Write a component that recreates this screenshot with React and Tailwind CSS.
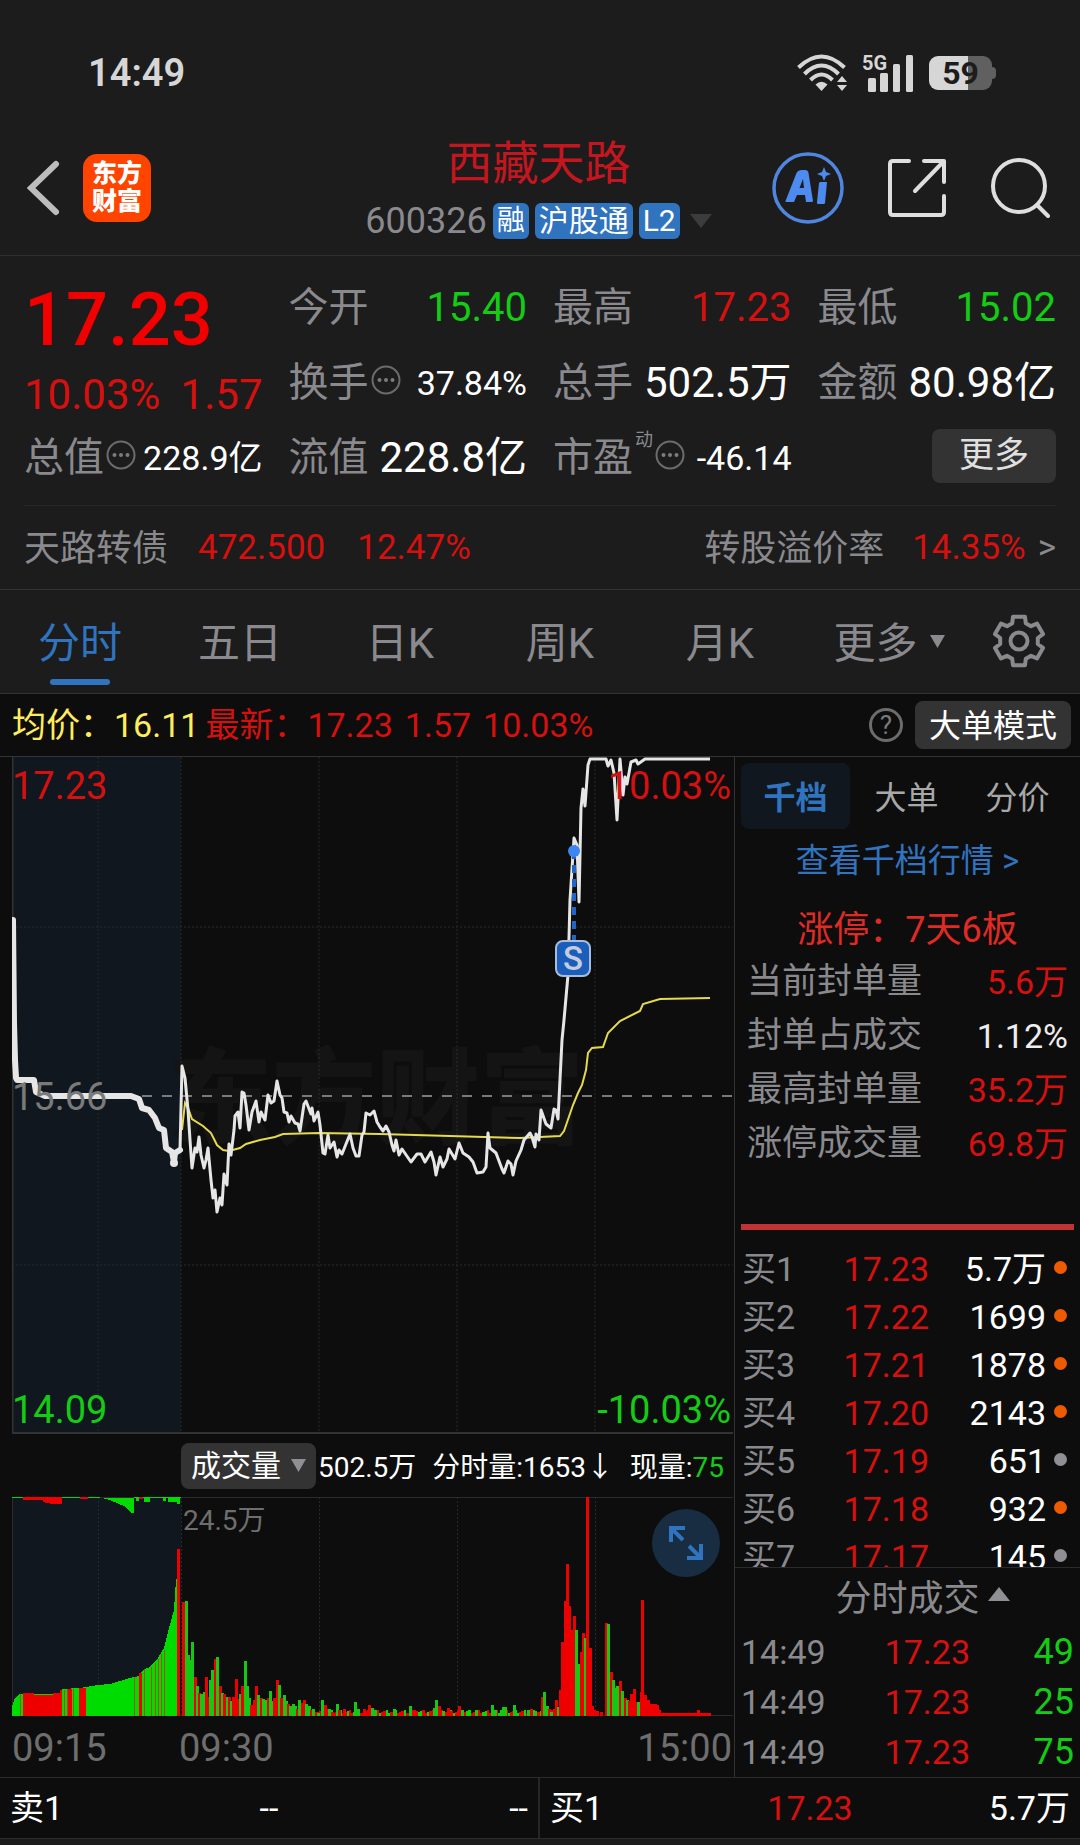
import React, { useState } from "react";

const RED = "text-[#d6100e]";
const GREEN = "text-[#14cc14]";

const quoteColumns = [
  [
    { label: "今开", value: "15.40", size: "text-[40px]", color: GREEN },
    { label: "换手", value: "37.84%", size: "text-[34px]", info: true },
    { label: "流值", value: "228.8亿", size: "text-[42px]" },
  ],
  [
    { label: "最高", value: "17.23", size: "text-[40px]", color: RED },
    { label: "总手", value: "502.5万", size: "text-[42px]" },
    { label: "市盈", value: "-46.14", size: "text-[34px]", sup: "动", info: true },
  ],
  [
    { label: "最低", value: "15.02", size: "text-[40px]", color: GREEN },
    { label: "金额", value: "80.98亿", size: "text-[42px]" },
  ],
];

const periods = ["分时", "五日", "日K", "周K", "月K"];
const depthTabs = ["千档", "大单", "分价"];

const sealStats = [
  { label: "当前封单量", value: "5.6万", color: RED },
  { label: "封单占成交", value: "1.12%", color: "text-[#eeeeee]" },
  { label: "最高封单量", value: "35.2万", color: RED },
  { label: "涨停成交量", value: "69.8万", color: RED },
];

const bids = [
  { level: "买1", price: "17.23", qty: "5.7万", big: true },
  { level: "买2", price: "17.22", qty: "1699", big: true },
  { level: "买3", price: "17.21", qty: "1878", big: true },
  { level: "买4", price: "17.20", qty: "2143", big: true },
  { level: "买5", price: "17.19", qty: "651", big: false },
  { level: "买6", price: "17.18", qty: "932", big: true },
  { level: "买7", price: "17.17", qty: "145", big: false },
];

const trades = [
  { time: "14:49", price: "17.23", qty: "49" },
  { time: "14:49", price: "17.23", qty: "25" },
  { time: "14:49", price: "17.23", qty: "75" },
];

// Opening auction, then the minute line
const auctionLine =
  "13,920 14,1023 15,1060 16,1078 17,1080 34,1080 36,1092 45,1096 131,1096 139,1099 142,1108 149,1110 155,1118 159,1128 164,1130 166,1148 172,1152 174,1162 175,1153 180,1150";
const priceLine =
  "180,1150 182,1066 185,1078 188,1110 190,1140 192,1168 195,1148 197,1152 199,1137 201,1155 204,1168 206,1160 208,1148 211,1180 213,1198 215,1190 217,1212 220,1198 222,1205 224,1174 227,1185 229,1144 231,1155 234,1130 235,1116 238,1112 240,1128 242,1092 244,1093 246,1105 249,1130 252,1112 256,1101 259,1122 261,1112 265,1120 268,1095 271,1103 274,1101 277,1081 280,1095 282,1098 284,1112 287,1113 289,1122 291,1116 295,1123 298,1124 300,1131 304,1104 306,1101 311,1114 312,1108 314,1121 318,1112 320,1125 323,1153 325,1154 328,1135 330,1148 334,1142 337,1157 339,1150 342,1154 350,1134 353,1148 356,1156 359,1156 362,1135 364,1132 366,1113 370,1115 374,1111 377,1122 380,1127 383,1131 386,1126 389,1132 392,1145 394,1151 396,1140 399,1155 402,1149 411,1162 417,1154 421,1154 425,1162 431,1152 434,1162 436,1175 440,1157 443,1167 447,1159 449,1149 455,1159 459,1143 463,1153 469,1157 473,1162 477,1173 483,1172 486,1167 488,1133 490,1148 496,1153 502,1169 504,1173 508,1161 511,1164 513,1175 516,1161 521,1150 524,1140 530,1133 532,1137 535,1147 536,1134 539,1140 541,1110 546,1124 551,1128 554,1109 556,1110 558,1119 562,1040 564,1020 568,975 570,900 574,838 577,845 579,902 581,808 583,789 585,806 588,765 590,759 606,759 608,766 611,760 614,773 617,820 620,759 623,795 625,777 627,784 631,762 636,760 638,764 645,759 710,759";
const averageLine =
  "182,1130 185,1103 188,1108 192,1119 203,1126 211,1133 217,1145 223,1150 229,1151 240,1148 246,1144 260,1140 275,1137 283,1134 319,1133 380,1134 450,1136 520,1138 560,1136 564,1131 573,1105 578,1093 582,1085 586,1070 588,1053 592,1048 603,1047 608,1033 620,1021 640,1011 643,1004 660,999 710,998";

// [x, top of the bar, 1 = up / 0 = down]
const volumeBars = [
  [182, 1602, 1], [185, 1601, 0], [187, 1655, 0], [189, 1660, 0], [191, 1642, 0], [194, 1677, 1], [196, 1686, 0], [198, 1693, 1],
  [200, 1694, 0], [203, 1692, 0], [205, 1677, 1], [207, 1697, 1], [209, 1680, 0], [211, 1670, 0], [214, 1659, 1], [216, 1657, 0],
  [219, 1686, 1], [221, 1693, 0], [223, 1694, 1], [226, 1697, 0], [228, 1697, 1], [230, 1701, 0], [232, 1697, 1], [235, 1679, 1],
  [237, 1699, 1], [239, 1694, 0], [241, 1686, 1], [244, 1661, 0], [246, 1686, 0], [248, 1698, 0], [250, 1705, 1], [253, 1700, 1],
  [255, 1686, 1], [257, 1695, 0], [260, 1698, 1], [262, 1699, 0], [264, 1700, 0], [267, 1698, 1], [269, 1691, 0], [271, 1701, 0],
  [273, 1698, 1], [276, 1680, 1], [278, 1685, 0], [280, 1698, 1], [283, 1695, 0], [285, 1701, 0], [287, 1704, 1], [289, 1706, 0],
  [292, 1704, 0], [294, 1706, 0], [296, 1709, 1], [298, 1700, 0], [301, 1703, 1], [303, 1700, 1], [305, 1704, 0], [308, 1706, 0],
  [310, 1710, 1], [312, 1709, 0], [315, 1712, 1], [317, 1713, 0], [321, 1700, 0], [324, 1705, 1], [326, 1709, 1], [328, 1709, 0],
  [331, 1712, 1], [336, 1704, 0], [338, 1710, 1], [343, 1709, 1], [354, 1702, 0], [357, 1709, 0], [363, 1709, 1], [368, 1705, 1],
  [371, 1708, 0], [374, 1710, 0], [393, 1709, 0], [401, 1711, 1], [409, 1706, 0], [412, 1710, 1], [415, 1711, 1], [433, 1708, 0],
  [435, 1700, 0], [438, 1706, 1], [442, 1711, 0], [447, 1708, 1], [450, 1711, 1], [458, 1706, 1], [461, 1710, 0], [475, 1710, 0],
  [491, 1705, 0], [494, 1710, 0], [500, 1710, 0], [502, 1707, 0], [504, 1707, 0], [513, 1705, 0], [527, 1710, 0], [530, 1709, 1],
  [534, 1711, 0], [541, 1697, 1], [543, 1692, 0], [546, 1706, 0], [548, 1709, 1], [550, 1712, 0], [553, 1709, 1], [555, 1700, 1],
  [557, 1707, 0], [559, 1690, 1], [561, 1642, 1], [564, 1601, 1], [566, 1564, 1], [568, 1606, 1], [570, 1630, 1], [573, 1616, 1],
  [575, 1630, 0], [577, 1664, 0], [580, 1652, 1], [582, 1633, 1], [584, 1638, 0], [586, 1497, 1], [589, 1648, 1], [591, 1706, 1],
  [593, 1710, 1], [596, 1711, 1], [600, 1712, 1], [605, 1623, 1], [607, 1624, 0], [610, 1672, 1], [612, 1680, 0], [614, 1688, 0],
  [616, 1686, 0], [619, 1681, 1], [621, 1691, 0], [624, 1698, 1], [626, 1700, 0], [628, 1701, 1], [630, 1694, 1], [633, 1689, 1],
  [635, 1702, 1], [637, 1702, 0], [640, 1692, 1], [641, 1600, 1], [644, 1695, 1], [647, 1700, 1], [649, 1704, 1], [652, 1704, 1],
  [654, 1704, 1], [656, 1705, 1], [658, 1710, 1],
];

// quiet minutes around noon, about the same small volume in each
const quietBars = Array.from({ length: 105 }, (_, i) => ({
  x: 312 + i * 2.3,
  top: 1710 + ((i * 7) % 4),
  up: (i * 5) % 7 < 4,
}));

const auctionStripes = [
  [20, 1694], [64, 1690], [67, 1689], [73, 1689], [134, 1677], [144, 1669], [151, 1667], [155, 1663], [158, 1659], [161, 1654], [164, 1650],
];

const gearPoints = Array.from({ length: 6 }, (_, k) =>
  [[-21, 19], [-14, 25], [14, 25], [21, 19]].map(([deg, r]) => {
    const a = ((k * 60 + deg) * Math.PI) / 180;
    return `${(27 + r * Math.sin(a)).toFixed(1)},${(27 - r * Math.cos(a)).toFixed(1)}`;
  })
)
  .flat()
  .join(" ");

function InfoDots() {
  return (
    <svg viewBox="0 0 30 30" className="mb-1.5 ml-0.5 h-[30px] w-[30px] shrink-0" fill="none">
      <circle cx="15" cy="15" r="13.5" stroke="#6c6c6e" strokeWidth="2" />
      <circle cx="8.5" cy="15" r="2" fill="#7c7c80" />
      <circle cx="15" cy="15" r="2" fill="#7c7c80" />
      <circle cx="21.5" cy="15" r="2" fill="#7c7c80" />
    </svg>
  );
}

function StatusBar() {
  return (
    <div className="flex h-[134px] items-center justify-between pt-3 pr-[84px] pl-[88px]">
      <span className="text-[38px] font-semibold text-[#d6d6d6]">14:49</span>
      <div className="flex items-center gap-[15px]">
        <svg viewBox="0 0 50 38" className="h-[38px] w-[50px]" fill="none" stroke="#d6d6d6" strokeWidth="4">
          <path d="M1.5 13.5 Q24.500 -8.500 47.500 13.500" />
          <path d="M7.500 20 Q24.500 3 41.500 20" />
          <path d="M13.500 26 Q24.500 15 35.500 26" />
          <path d="M24.500 37 L18.500 30.500 Q24.500 25 30.500 30.500 Z" fill="#d6d6d6" stroke="none" />
          <path d="M45 22 L50 28 H40 Z M45 37 L50 31 H40 Z" fill="#d6d6d6" stroke="none" />
        </svg>
        <div className="relative h-[38px] w-[52px]">
          <span className="absolute top-0 left-0 text-[20px] leading-[18px] font-bold text-[#d6d6d6]">5G</span>
          <svg viewBox="0 0 52 38" className="h-full w-full" fill="#d6d6d6">
            <rect x="6" y="24" width="8" height="14" rx="1.500" />
            <rect x="18" y="19" width="8" height="19" rx="1.500" />
            <rect x="31" y="10" width="7" height="28" rx="1.500" />
            <rect x="44" y="1" width="7" height="37" rx="1.500" />
          </svg>
        </div>
        <div className="flex items-center">
          <div className="flex h-[34px] w-[63px] items-center justify-center rounded-[9px] bg-linear-to-r from-[#d6d6d6] from-62% to-[#606060] to-62% text-[32px] font-bold text-[#1c1c1c]">
            59
          </div>
          <div className="h-3 w-1 rounded-r bg-[#606060]" />
        </div>
      </div>
    </div>
  );
}

function Header() {
  return (
    <header className="grid h-[122px] grid-cols-[1fr_auto_1fr] items-center border-b border-[#2e2e2e] pr-[30px] pb-3.5 pl-[27px]">
      <div className="flex items-center gap-[23px]">
        <button aria-label="返回">
          <svg viewBox="0 0 33 56" className="h-[56px] w-[33px]" fill="none" stroke="#bdbdbd" strokeWidth="6" strokeLinecap="round">
            <path d="M29 4 L4 28 L29 52" />
          </svg>
        </button>
        <div className="flex h-[68px] w-[68px] flex-col items-center justify-center rounded-[14px] bg-[#ff4400] text-[25px] leading-[28px] font-black text-white">
          <span>东方</span>
          <span>财富</span>
        </div>
      </div>
      <div className="flex flex-col items-center gap-3.5">
        <h1 className="text-[46px] leading-[52px] text-[#c4161f]">西藏天路</h1>
        <div className="flex items-center gap-1.5 leading-9">
          <span className="text-[36px] text-[#8a8a8e]">600326</span>
          <span className="rounded-md bg-[#3073be] px-1 text-[28px] text-white">融</span>
          <span className="rounded-md bg-[#3073be] px-1 text-[30px] text-white">沪股通</span>
          <span className="rounded-md bg-[#3073be] px-1 text-[30px] text-white">L2</span>
          <svg viewBox="0 0 22 14" className="ml-1 h-3.5 w-[22px]" fill="#3c3c3c">
            <path d="M0 0 H22 L11 14 Z" />
          </svg>
        </div>
      </div>
      <div className="flex items-center justify-end gap-[43px]">
        <button aria-label="AI 助手">
          <svg viewBox="0 0 72 72" className="h-[72px] w-[72px]" fill="none">
            <circle cx="36" cy="36" r="34" stroke="#4f86e0" strokeWidth="3.500" />
            <path
              d="M13.500 49 L24.500 21 Q26 18 30 18 H33 Q36 18 36.500 21 L41 49 Q41 50 39.500 50 H34 L33 43 H25 L22 50 H14.500 Q13 50 13.500 49 Z M27.500 36 H32 L31 27 Z"
              fill="#4d8bf0"
              fillRule="evenodd"
            />
            <path d="M48 30 H55 L53 51 Q53 52 51.500 52 H46 Q44.500 52 45 50 L47 31 Z" fill="#4d8bf0" />
            <path d="M52 15 L54 20 L59 22 L54 24 L52 29 L50 24 L45 22 L50 20 Z" fill="#4d8bf0" />
          </svg>
        </button>
        <button aria-label="分享">
          <svg viewBox="0 0 60 60" className="h-[60px] w-[60px]" fill="none" stroke="#dedede" strokeWidth="4" strokeLinecap="round" strokeLinejoin="round">
            <path d="M22 3 H6 Q3 3 3 6 V54 Q3 57 6 57 H54 Q57 57 57 54 V38" />
            <path d="M37 3 H57 V24 M57 3 L28 33" />
          </svg>
        </button>
        <button aria-label="搜索">
          <svg viewBox="0 0 60 62" className="h-[62px] w-[60px]" fill="none" stroke="#dedede" strokeWidth="4" strokeLinecap="round">
            <circle cx="29" cy="29" r="26" />
            <path d="M47 48 L58 59" />
          </svg>
        </button>
      </div>
    </header>
  );
}

function QuoteCell({ item }) {
  return (
    <div className="flex h-[75px] items-center justify-between">
      <div className="flex items-center text-[40px] text-[#8a8a8e]">
        {item.label}
        {item.sup && <span className="mb-9 ml-0.5 text-[18px]">{item.sup}</span>}
        {item.info && <InfoDots />}
      </div>
      <span className={`${item.size} ${item.color || "text-white"}`}>{item.value}</span>
    </div>
  );
}

function Quote() {
  return (
    <section className="px-6">
      <div className="grid grid-cols-4 gap-[26px] border-b border-[#262626] pt-3.5 pb-2.5 leading-none whitespace-nowrap">
        <div>
          <div className="flex h-[100px] items-center text-[74px] font-medium text-[#f20000]">17.23</div>
          <div className={`flex h-[50px] items-center justify-between text-[42px] ${RED}`}>
            <span>10.03%</span>
            <span>1.57</span>
          </div>
          <QuoteCell item={{ label: "总值", value: "228.9亿", size: "text-[34px]", info: true }} />
        </div>
        {quoteColumns.map((column, i) => (
          <div key={i}>
            {column.map((item) => (
              <QuoteCell key={item.label} item={item} />
            ))}
            {i === 2 && (
              <div className="flex h-[75px] items-center justify-end pb-1">
                <button className="h-[54px] rounded-lg bg-[#333333] px-[27px] text-[35px] text-[#e0e0e0]">更多</button>
              </div>
            )}
          </div>
        ))}
      </div>
      <div className="flex h-[83px] items-center pt-0.5 text-[35px] text-[#8a8a8e]">
        <span className="text-[36px]">天路转债</span>
        <span className={`ml-[30px] ${RED}`}>472.500</span>
        <span className={`ml-8 ${RED}`}>12.47%</span>
        <span className="ml-auto text-[36px]">转股溢价率</span>
        <a href="#premium" className="ml-7 flex items-center gap-3">
          <span className={RED}>14.35%</span>
          <span>&gt;</span>
        </a>
      </div>
    </section>
  );
}

function PeriodTabs() {
  const [active, setActive] = useState("分时");

  return (
    <nav className="flex h-[105px] border-y border-[#333333] text-[42px] text-[#8a8a8e]">
      {periods.map((p) => (
        <button
          key={p}
          onClick={() => setActive(p)}
          className={`relative flex-[160] pt-1 ${p === active ? "text-[#3073be]" : ""}`}
        >
          {p}
          {p === active && <span className="absolute bottom-2 left-1/2 h-1.5 w-[60px] -translate-x-1/2 rounded-full bg-[#3073be]" />}
        </button>
      ))}
      <button className="flex flex-[178] items-center justify-center gap-3 pt-1">
        更多
        <svg viewBox="0 0 15 13" className="mb-1 h-[13px] w-[15px]" fill="#8a8a8e">
          <path d="M0 0 H15 L7.500 13 Z" />
        </svg>
      </button>
      <button aria-label="设置" className="flex w-[102px] shrink-0 items-center pb-0.5 pl-3.5">
        <svg viewBox="0 0 54 54" className="h-[54px] w-[54px]" fill="none" stroke="#8a8a8e" strokeWidth="4" strokeLinejoin="round">
          <polygon points={gearPoints} />
          <circle cx="27" cy="27" r="8.500" />
        </svg>
      </button>
    </nav>
  );
}

function InfoBar() {
  return (
    <div className="flex h-[63px] items-center border-b border-[#333333] bg-[#0d0d0d] pr-[9px] pl-3 text-[34px] whitespace-nowrap">
      <span className="text-[#ffec5e]">均价：16.11</span>
      <div className={`ml-1.5 flex gap-3 ${RED}`}>
        <span>最新：17.23</span>
        <span>1.57</span>
        <span>10.03%</span>
      </div>
      <button aria-label="说明" className="mr-3 ml-auto flex h-[34px] w-[34px] items-center justify-center rounded-full border-3 border-[#6c6c6c] text-[26px] leading-none text-[#7a7a7a]">
        ?
      </button>
      <button className="h-12 rounded-lg bg-[#333333] px-3.5 text-[32px] leading-[50px] text-white">大单模式</button>
    </div>
  );
}

function PriceChart() {
  return (
    <div className="relative text-[38px] leading-none">
      <svg viewBox="12 757 722 677" className="block h-auto w-full" fill="none">
        <rect x="12" y="757" width="169" height="677" fill="#10171f" />
        <text x="168" y="1136" fontSize="104" fontWeight="900" fill="#141414">东方财富</text>
        <g stroke="#262a2d" strokeWidth="1" strokeDasharray="2 2">
          <path d="M98 757 V1434 M181 757 V1434 M319 757 V1434 M457 757 V1434 M595 757 V1434" />
          <path d="M12 927 H733 M12 1265 H733" />
        </g>
        <path d="M12.500 757 V1433 H733" stroke="#333333" strokeWidth="2" />
        <path d="M142 1096 H733" stroke="#7a7a7a" strokeWidth="2" strokeDasharray="10 10" />
        <polyline points={averageLine} stroke="#e5d94c" strokeWidth="2" />
        <polyline points={auctionLine} stroke="#e6e6e6" strokeWidth="6" strokeLinejoin="round" strokeLinecap="round" />
        <polyline points={priceLine} stroke="#e6e6e6" strokeWidth="3" strokeLinejoin="round" />
        <circle cx="174" cy="1163" r="4" fill="#e6e6e6" />
        <path d="M574 851 V941" stroke="#2166c4" strokeWidth="4" strokeDasharray="8 6" />
        <circle cx="574" cy="851" r="6" fill="#3d86f0" />
        <rect x="556" y="941" width="34" height="35" rx="7" fill="#1b5dba" stroke="#a8bdd9" strokeWidth="2" />
        <text x="573" y="970" textAnchor="middle" fontSize="33" fontWeight="500" fill="#c3cddb">S</text>
      </svg>
      <span className={`absolute top-[10px] left-0 ${RED}`}>17.23</span>
      <span className={`absolute top-[10px] right-[3px] ${RED}`}>10.03%</span>
      <span className="absolute top-[321px] left-0 text-[#7a7a7a]">15.66</span>
      <span className={`absolute bottom-[5px] left-0 ${GREEN}`}>14.09</span>
      <span className={`absolute right-[3px] bottom-[5px] ${GREEN}`}>-10.03%</span>
    </div>
  );
}

function VolumeChart() {
  return (
    <div className="relative">
      <svg viewBox="12 1497 722 219" className="block h-auto w-full" shapeRendering="crispEdges">
        <rect x="12" y="1497" width="169" height="219" fill="#10171f" />
        <path
          d="M98 1497 V1716 M181 1497 V1716 M319 1497 V1716 M457 1497 V1716 M595 1497 V1716"
          stroke="#262a2d"
          strokeDasharray="2 2"
        />
        <path d="M12 1497.500 H733 M12 1715.500 H733 M12.500 1497 V1716" stroke="#2b2b2b" />
        <polygon
          fill="#00dc00"
          points="12,1716 12,1706 15,1698 19,1694 60,1694 62,1689 80,1688 98,1685 110,1684 130,1678 139,1676 143,1670 150,1667 158,1658 164,1648 168,1632 174,1610 176,1580 177,1578 180,1578 180,1716"
        />
        <path d="M23 1716 V1693 H34 V1695 H53 V1693 H60 V1690 H62 V1716 Z M67 1689 H72 V1716 H67 Z M79 1688 H86 V1716 H79 Z M139 1673 H142 V1716 H139 Z M177 1549 H180 V1716 H177 Z" fill="#ee0000" />
        {auctionStripes.map(([x, top]) => (
          <rect key={x} x={x} y={top} width="1" height={1716 - top} fill="#b04a10" />
        ))}
        <path d="M12 1497 H181 V1498 H12 Z M98 1497 L110 1500 L124 1506 L132 1513 H134 V1497 Z M136 1497 H139 V1501 H136 Z M144 1497 H150 V1502 H144 Z M163 1497 H166 V1501 H163 Z M168 1497 H177 V1502 H168 Z M177 1497 H180 V1504 H177 Z" fill="#00dc00" />
        <path d="M23 1497 H62 V1504 H52 L43 1502 V1500 H23 Z M80 1497 H88 V1499 H80 Z M139 1497 H143 V1499 H139 Z" fill="#ee0000" />
        {quietBars.map((b) => (
          <rect key={b.x} x={b.x} y={b.top} width="2.300" height={1716 - b.top} fill={b.up ? "#ee0000" : "#00dc00"} />
        ))}
        {volumeBars.map(([x, top, up]) => (
          <rect key={x} x={x} y={top} width="3" height={1716 - top} fill={up ? "#ee0000" : "#14c814"} />
        ))}
        <path d="M660 1716 V1713 H697 V1710 H700 V1713 H711 V1716 Z" fill="#ee0000" />
      </svg>
      <span className="absolute top-2 left-[171px] text-[28px] leading-[32px] text-[#6e6e6e]">24.5万</span>
      <button aria-label="全屏" className="absolute top-3 right-[14px] flex h-[68px] w-[68px] items-center justify-center rounded-full bg-[#182c42]">
        <svg viewBox="0 0 34 34" className="h-[34px] w-[34px]" fill="none" stroke="#3073be" strokeWidth="4">
          <path d="M16 2 H2 V16 M2 2 L14 14" />
          <path d="M18 32 H32 V18 M32 32 L20 20" />
        </svg>
      </button>
    </div>
  );
}

function DepthPanel() {
  const [tab, setTab] = useState("千档");

  return (
    <aside className="flex w-[346px] shrink-0 flex-col border-l border-[#333333] pt-1.5 text-[34px]">
      <div className="flex h-[66px] gap-0.5 pr-2 pl-1.5 text-[32px] text-[#a8a8a8]">
        {depthTabs.map((t) => (
          <button
            key={t}
            onClick={() => setTab(t)}
            className={`flex-1 rounded-lg pt-1 ${t === tab ? "bg-[#10171f] font-bold text-[#3073be]" : ""}`}
          >
            {t}
          </button>
        ))}
      </div>
      <a href="#depth" className="block text-center text-[33px] leading-[64px] text-[#3073be]">查看千档行情 &gt;</a>
      <p className="pt-3 text-center text-[36px] leading-[50px] text-[#e02a24]">涨停：7天6板</p>
      <table className="w-full">
        <tbody>
          {sealStats.map((s) => (
            <tr key={s.label} className="h-[54px] leading-[54px]">
              <th className="p-0 pl-3 text-left text-[35px] font-normal text-[#8a8a8e]">{s.label}</th>
              <td className={`p-0 pr-3 text-right ${s.color}`}>{s.value}</td>
            </tr>
          ))}
        </tbody>
      </table>
      <div className="mx-1.5 mt-[53px] h-1.5 bg-[#bf3333]" />
      <div className="mt-[15px] h-[323px] overflow-hidden border-b border-[#2b2b2b]">
        <table className="w-full">
          <tbody>
            {bids.map((b) => (
              <tr key={b.level} className="h-12 leading-[48px]">
                <th className="w-[70px] p-0 pl-[7px] text-left font-normal whitespace-nowrap text-[#8a8a8e]">{b.level}</th>
                <td className={`p-0 text-right ${RED}`}>{b.price}</td>
                <td className="w-[117px] p-0 text-right text-white">{b.qty}</td>
                <td className="w-[34px] p-0 pl-2">
                  <div className={`mb-1 h-[13px] w-[13px] rounded-full ${b.big ? "bg-[#ee5a00]" : "bg-[#8f8f94]"}`} />
                </td>
              </tr>
            ))}
          </tbody>
        </table>
      </div>
      <button className="flex h-[59px] items-center justify-center gap-2 pt-0.5 pl-[30px] text-[36px] text-[#8a8a8e]">
        分时成交
        <svg viewBox="0 0 22 14" className="mb-2.5 h-3.5 w-[22px]" fill="#8f8f94">
          <path d="M0 14 H22 L11 0 Z" />
        </svg>
      </button>
      <table className="w-full">
        <tbody>
          {trades.map((t) => (
            <tr key={t.qty} className="h-[50px] leading-[50px]">
              <td className="p-0 pl-1.5 text-[#8a8a8e]">{t.time}</td>
              <td className={`p-0 text-right ${RED}`}>{t.price}</td>
              <td className={`w-[110px] p-0 pr-1.5 text-right text-[36px] ${GREEN}`}>{t.qty}</td>
            </tr>
          ))}
        </tbody>
      </table>
    </aside>
  );
}

export default function App() {
  return (
    <div className="min-h-screen bg-[#1c1c1c] font-['Roboto','Noto_Sans_CJK_SC',sans-serif]">
      <StatusBar />
      <Header />
      <Quote />
      <PeriodTabs />
      <InfoBar />

      <main className="flex bg-[#0d0d0d]">
        <div className="min-w-0 flex-1 pl-3">
          <PriceChart />
          <div className="flex h-[63px] items-center pr-2.5 pl-[169px] text-[30px] whitespace-nowrap text-white">
            <button className="flex h-[46px] items-center gap-2.5 rounded-lg bg-[#333333] px-2.5">
              成交量
              <svg viewBox="0 0 15 13" className="h-[13px] w-[15px]" fill="#8f8f94">
                <path d="M0 0 H15 L7.500 13 Z" />
              </svg>
            </button>
            <div className="flex flex-1 justify-between pt-1 pl-0.5 text-[28px]">
              <span>502.5万</span>
              <span>分时量:1653↓</span>
              <span>
                现量:<span className={GREEN}>75</span>
              </span>
            </div>
          </div>
          <VolumeChart />
          <div className="flex h-[61px] items-center pt-1 text-[38px] text-[#6e6e6e]">
            <span className="w-[167px]">09:15</span>
            <span>09:30</span>
            <span className="mr-0.5 ml-auto">15:00</span>
          </div>
        </div>
        <DepthPanel />
      </main>

      <footer className="grid grid-cols-2 border-y border-[#2b2b2b] bg-[#0d0d0d] text-[34px] leading-[60px] text-white">
        <div className="grid grid-cols-3 border-r-2 border-[#262626] px-2.5">
          <span>卖1</span>
          <span className="text-center">--</span>
          <span className="text-right">--</span>
        </div>
        <div className="grid grid-cols-3 px-2.5">
          <span>买1</span>
          <span className={`text-center ${RED}`}>17.23</span>
          <span className="text-right">5.7万</span>
        </div>
      </footer>
    </div>
  );
}
